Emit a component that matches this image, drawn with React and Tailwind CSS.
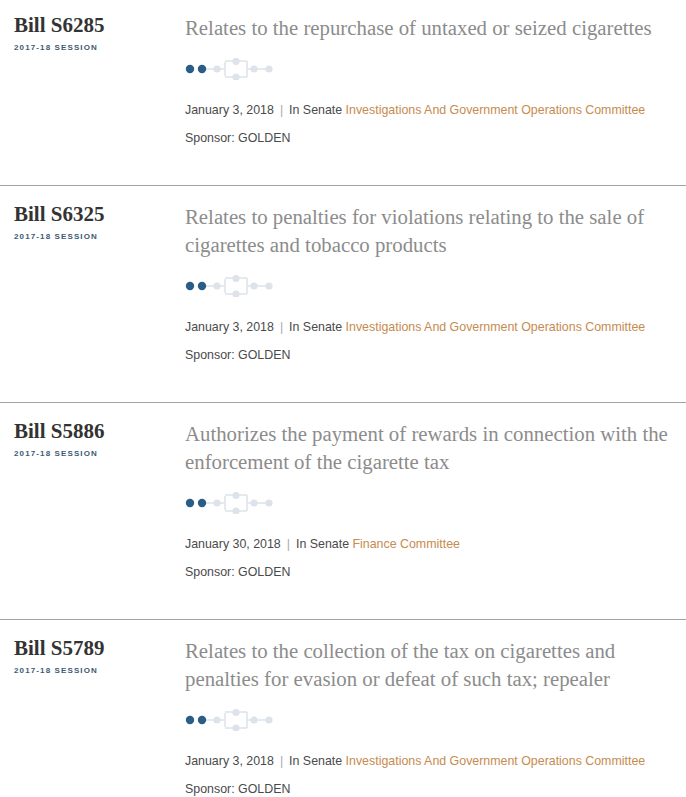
import React from 'react';

const bills = [
  {
    id: 'S6285',
    title: ['Relates to the repurchase of untaxed or seized cigarettes'],
    date: 'January 3, 2018',
    committee: 'Investigations And Government Operations Committee',
  },
  {
    id: 'S6325',
    title: ['Relates to penalties for violations relating to the sale of', 'cigarettes and tobacco products'],
    date: 'January 3, 2018',
    committee: 'Investigations And Government Operations Committee',
  },
  {
    id: 'S5886',
    title: ['Authorizes the payment of rewards in connection with the', 'enforcement of the cigarette tax'],
    date: 'January 30, 2018',
    committee: 'Finance Committee',
  },
  {
    id: 'S5789',
    title: ['Relates to the collection of the tax on cigarettes and', 'penalties for evasion or defeat of such tax; repealer'],
    date: 'January 3, 2018',
    committee: 'Investigations And Government Operations Committee',
  },
];

// little bill-status track: two steps done, the rest still grey
const StatusTrack = () => (
  <svg width="92" height="22" viewBox="0 0 92 22" className="block">
    <g stroke="#dde3ea" strokeWidth="1.5" fill="none">
      <line x1="17" y1="11" x2="40" y2="11" />
      <path d="M40 4 V18 M40 3 H62 M40 19 H62 M62 3 V19" />
      <line x1="62" y1="11" x2="84" y2="11" />
    </g>
    <circle cx="5" cy="11" r="4.2" fill="#2a5d87" />
    <circle cx="17" cy="11" r="4.2" fill="#2a5d87" />
    <circle cx="32" cy="11" r="3.6" fill="#dde3ea" />
    <circle cx="51" cy="3.5" r="3.6" fill="#dde3ea" />
    <circle cx="51" cy="19" r="3.6" fill="#dde3ea" />
    <circle cx="69" cy="11" r="3.6" fill="#dde3ea" />
    <circle cx="84" cy="11" r="3.6" fill="#dde3ea" />
  </svg>
);

const BillRow = ({ bill, first }) => (
  <div className={`flex ${first ? 'pt-[14px]' : 'pt-[17px] border-t border-[#a3a3a3]'} pb-[37px]`}>
    <div className="w-[185px] shrink-0 pl-[14px]">
      <div className="text-[21px] leading-[22px] font-bold text-[#333] font-['Liberation_Serif',serif]">
        Bill {bill.id}
      </div>
      <div className="mt-[6px] text-[8px] leading-[12px] font-semibold tracking-[0.14em] text-[#3d5a73] font-['Liberation_Sans',sans-serif]">
        2017-18 SESSION
      </div>
    </div>
    <div className="flex-1">
      <div className="text-[20.8px] leading-[28px] text-[#8c8c8c] font-['Liberation_Serif',serif]">
        {bill.title.map((line) => (
          <div key={line} className="whitespace-nowrap">{line}</div>
        ))}
      </div>
      <div className="mt-[16px]">
        <StatusTrack />
      </div>
      <div className="mt-[20px] text-[12.4px] leading-[20px] text-[#4a4a4a] font-['Liberation_Sans',sans-serif] whitespace-nowrap">
        {bill.date}
        <span className="mx-[6px] text-[#aaa]">|</span>
        In Senate <span className="text-[#c68b4f]">{bill.committee}</span>
      </div>
      <div className="mt-[8px] text-[12.4px] leading-[20px] text-[#4a4a4a] font-['Liberation_Sans',sans-serif]">
        Sponsor: GOLDEN
      </div>
    </div>
  </div>
);

const App = () => {
  return (
    <div className="w-[686px] bg-white">
      {bills.map((bill, i) => (
        <BillRow key={bill.id} bill={bill} first={i === 0} />
      ))}
    </div>
  );
};

export default App;
